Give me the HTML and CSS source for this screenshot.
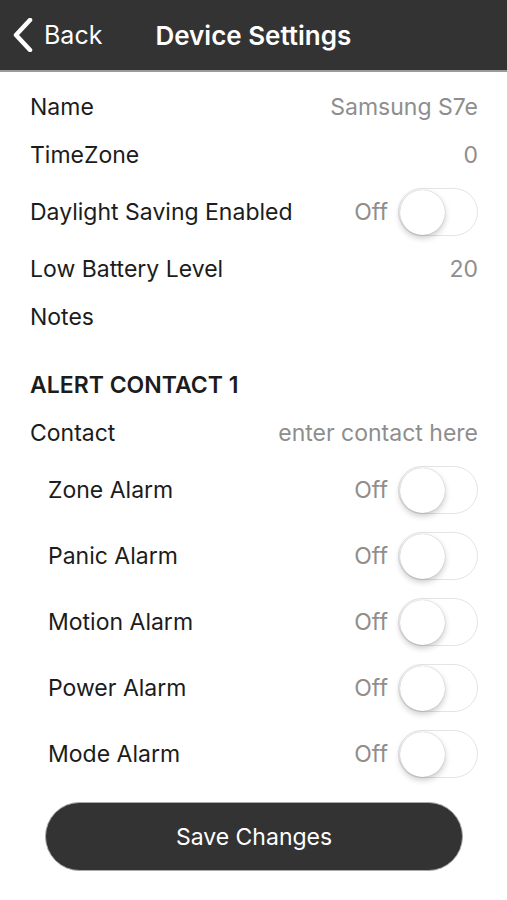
FILE: index.html
```html
<!DOCTYPE html>
<html lang="en">
<head>
    <meta charset="UTF-8">
    <meta name="viewport" content="width=device-width, initial-scale=1.0">
    <title>Device Settings</title>
    <link rel="stylesheet" href="styles.css">
</head>
<body>
    <header class="nav-bar">
        <a class="back-link" href="#">
            <svg class="back-icon" width="22" height="34" viewBox="0 0 22 34">
                <path d="M18 2 L4 17 L18 32" fill="none" stroke="#fff" stroke-width="4.5" stroke-linecap="round" stroke-linejoin="round"/>
            </svg>
            <span>Back</span>
        </a>
        <h1>Device Settings</h1>
    </header>

    <main class="settings">
        <div class="row">
            <span class="label">Name</span>
            <span class="value">Samsung S7e</span>
        </div>
        <div class="row">
            <span class="label">TimeZone</span>
            <span class="value">0</span>
        </div>
        <div class="row toggle-row">
            <span class="label">Daylight Saving Enabled</span>
            <div class="switch-wrap">
                <span class="value">Off</span>
                <span class="switch"><span class="knob"></span></span>
            </div>
        </div>
        <div class="row">
            <span class="label">Low Battery Level</span>
            <span class="value">20</span>
        </div>
        <div class="row">
            <span class="label">Notes</span>
        </div>

        <h2 class="section-title">ALERT CONTACT 1</h2>
        <div class="row">
            <span class="label">Contact</span>
            <span class="value">enter contact here</span>
        </div>

        <div class="row toggle-row sub-row">
            <span class="label">Zone Alarm</span>
            <div class="switch-wrap">
                <span class="value">Off</span>
                <span class="switch"><span class="knob"></span></span>
            </div>
        </div>
        <div class="row toggle-row sub-row">
            <span class="label">Panic Alarm</span>
            <div class="switch-wrap">
                <span class="value">Off</span>
                <span class="switch"><span class="knob"></span></span>
            </div>
        </div>
        <div class="row toggle-row sub-row">
            <span class="label">Motion Alarm</span>
            <div class="switch-wrap">
                <span class="value">Off</span>
                <span class="switch"><span class="knob"></span></span>
            </div>
        </div>
        <div class="row toggle-row sub-row">
            <span class="label">Power Alarm</span>
            <div class="switch-wrap">
                <span class="value">Off</span>
                <span class="switch"><span class="knob"></span></span>
            </div>
        </div>
        <div class="row toggle-row sub-row">
            <span class="label">Mode Alarm</span>
            <div class="switch-wrap">
                <span class="value">Off</span>
                <span class="switch"><span class="knob"></span></span>
            </div>
        </div>

        <button class="save-btn" type="button">Save Changes</button>
    </main>
</body>
</html>
```

FILE: styles.css
```css
:root {
    --bar: #333333;
    --text: #1c1c1c;
    --muted: #8e8e8e;
    --line: #e4e4e4;
}

* {
    margin: 0;
    padding: 0;
    box-sizing: border-box;
    font-family: Inter, 'Liberation Sans', Arial, sans-serif;
}

body {
    background-color: #fff;
    color: var(--text);
    width: 507px;
    height: 900px;
    overflow: hidden;
}

.nav-bar {
    height: 72px;
    background-color: var(--bar);
    border-bottom: 2px solid #9a9a9a;
    display: flex;
    align-items: center;
    padding-left: 12px;
    color: #fff;
}

.back-link {
    display: flex;
    align-items: center;
    gap: 10px;
    color: #fff;
    text-decoration: none;
    font-size: 25px;
    margin-right: 53px;
}

.nav-bar h1 {
    font-size: 26px;
    font-weight: 600;
}

.settings {
    padding: 11px 29px 0 30px;
}

.row {
    height: 48px;
    display: flex;
    align-items: center;
    justify-content: space-between;
    font-size: 23px;
}

.toggle-row {
    height: 66px;
}

.sub-row {
    padding-left: 18px;
}

.value {
    color: var(--muted);
}

.switch-wrap {
    display: flex;
    align-items: center;
    gap: 10px;
}

.switch {
    width: 80px;
    height: 48px;
    border: 1.5px solid var(--line);
    border-radius: 24px;
    display: flex;
    align-items: center;
    padding-left: 1px;
}

.knob {
    width: 45px;
    height: 45px;
    border-radius: 50%;
    background-color: #fff;
    box-shadow: 0 3px 6px rgba(0, 0, 0, 0.22), 0 0 1px rgba(0, 0, 0, 0.3);
}

.section-title {
    height: 48px;
    margin-top: 20px;
    display: flex;
    align-items: center;
    font-size: 23px;
    font-weight: 600;
}

.save-btn {
    display: block;
    width: 418px;
    height: 69px;
    margin: 15px 0 0 15px;
    border: 1px solid #aaa;
    border-radius: 35px;
    background-color: var(--bar);
    color: #fff;
    font-size: 23px;
}
```
